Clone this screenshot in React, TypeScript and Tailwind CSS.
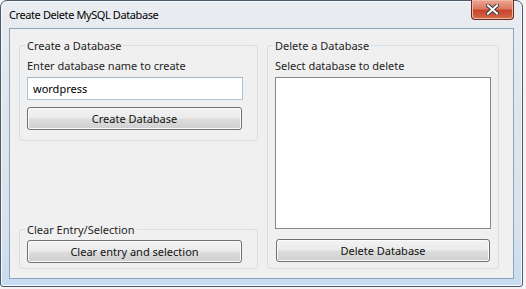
import type { ReactNode } from "react";

function WinButton({ children }: { children: ReactNode }) {
  return (
    <button className="h-[23px] w-full rounded-[3px] border border-[#707070] bg-[linear-gradient(#f2f2f2_0%,#ebebeb_48%,#dddddd_52%,#cfcfcf_100%)] text-[11px] leading-none text-[#111] shadow-[inset_0_0_0_1px_#fcfcfc]">
      {children}
    </button>
  );
}

function GroupBox({ title, className, children }: { title: string; className?: string; children: ReactNode }) {
  return (
    <fieldset className={"rounded-[3px] border border-[#d5dfe5] px-[7px] " + (className ?? "")}>
      <legend className="ml-[-2px] px-[2px] text-[11px] leading-[15px] text-[#1e1e1e]">{title}</legend>
      {children}
    </fieldset>
  );
}

export default function App() {
  return (
    <div className="h-[289px] w-[526px] overflow-hidden bg-[#f4f4f4] font-['Noto_Sans',sans-serif]">
      <div className="relative flex h-[287px] w-[523px] flex-col rounded-t-[7px] rounded-b-[3px] border border-[#4a5a6a] bg-[linear-gradient(180deg,#e9edf1_0%,#dfe5eb_40%,#d8e2ec_80%,#c6dcf2_100%)] px-[8px] pb-[7px] shadow-[inset_0_0_0_1px_#f6f8fa]">
        {/* title bar */}
        <div className="flex h-[28px] items-center text-[11px] tracking-[-0.4px] text-black">
          <span className="pt-[1px]">Create Delete MySQL Database</span>
        </div>
        <div className="absolute right-[8px] top-[-1px] flex h-[20px] w-[43px] items-center justify-center rounded-b-[4px] border border-[#6b2a1e] border-t-0 bg-[linear-gradient(#eba895_0%,#dc7a62_45%,#c8432b_55%,#d26c48_100%)] shadow-[inset_0_0_0_1px_#f0b6a6]">
          <svg width="13" height="11" viewBox="0 0 13 11">
            <path d="M2 1.5 L11 9.5 M11 1.5 L2 9.5" stroke="#3b3b3b" strokeWidth="4" strokeLinecap="square" />
            <path d="M2 1.5 L11 9.5 M11 1.5 L2 9.5" stroke="#ffffff" strokeWidth="2" strokeLinecap="square" />
          </svg>
        </div>

        {/* client area */}
        <div className="flex-1 border border-[#8da4bc] bg-[#f0f0f0] px-[9px] pb-[9px] pt-[9px]">
          <div className="grid h-full grid-cols-[239px_232px] gap-[9px]">
            <div className="flex flex-col justify-between">
              <GroupBox title="Create a Database" className="h-[103px]">
                <p className="mt-[5px] text-[11px] leading-[15px] text-[#1e1e1e]">Enter database name to create</p>
                <input
                  defaultValue="wordpress"
                  className="mt-[4px] h-[23px] w-[216px] border border-[#abc3d9] border-t-[#9fb3c7] bg-white px-[5px] text-[11px] text-black outline-none"
                />
                <div className="mt-[5px] w-[215px]">
                  <WinButton>Create Database</WinButton>
                </div>
              </GroupBox>
              <GroupBox title="Clear Entry/Selection" className="h-[47px]">
                <div className="mt-[1px] w-[215px]">
                  <WinButton>Clear entry and selection</WinButton>
                </div>
              </GroupBox>
            </div>
            <GroupBox title="Delete a Database" className="h-[231px]">
              <p className="mt-[5px] text-[11px] leading-[15px] text-[#1e1e1e]">Select database to delete</p>
              <div className="mt-[4px] h-[152px] w-[216px] border border-[#828790] bg-white" />
              <div className="mt-[8px] w-[215px] pl-[1px]">
                <WinButton>Delete Database</WinButton>
              </div>
            </GroupBox>
          </div>
        </div>
      </div>
    </div>
  );
}
